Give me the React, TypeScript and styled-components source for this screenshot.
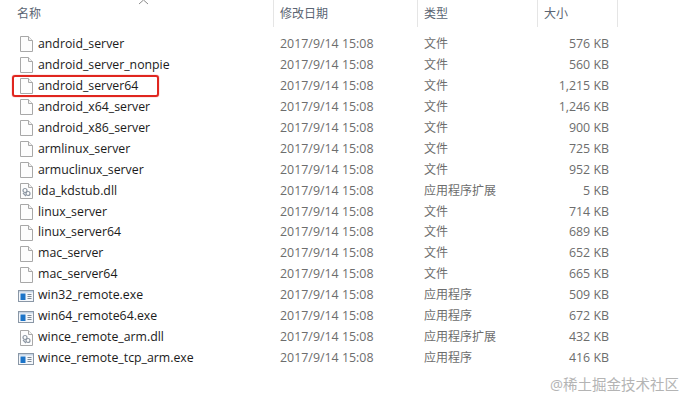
import styled, { createGlobalStyle } from "styled-components";

type Kind = "file" | "dll" | "exe";

const rows: { name: string; type: string; size: string; kind: Kind; marked?: boolean }[] = [
  { name: "android_server", type: "文件", size: "576 KB", kind: "file" },
  { name: "android_server_nonpie", type: "文件", size: "560 KB", kind: "file" },
  { name: "android_server64", type: "文件", size: "1,215 KB", kind: "file", marked: true },
  { name: "android_x64_server", type: "文件", size: "1,246 KB", kind: "file" },
  { name: "android_x86_server", type: "文件", size: "900 KB", kind: "file" },
  { name: "armlinux_server", type: "文件", size: "725 KB", kind: "file" },
  { name: "armuclinux_server", type: "文件", size: "952 KB", kind: "file" },
  { name: "ida_kdstub.dll", type: "应用程序扩展", size: "5 KB", kind: "dll" },
  { name: "linux_server", type: "文件", size: "714 KB", kind: "file" },
  { name: "linux_server64", type: "文件", size: "689 KB", kind: "file" },
  { name: "mac_server", type: "文件", size: "652 KB", kind: "file" },
  { name: "mac_server64", type: "文件", size: "665 KB", kind: "file" },
  { name: "win32_remote.exe", type: "应用程序", size: "509 KB", kind: "exe" },
  { name: "win64_remote64.exe", type: "应用程序", size: "672 KB", kind: "exe" },
  { name: "wince_remote_arm.dll", type: "应用程序扩展", size: "432 KB", kind: "dll" },
  { name: "wince_remote_tcp_arm.exe", type: "应用程序", size: "416 KB", kind: "exe" },
];

const FileIcon = ({ kind }: { kind: Kind }) => {
  if (kind === "exe") {
    return (
      <svg width="16" height="12" viewBox="0 0 16 12">
        <rect x="0.5" y="0.5" width="15" height="11" fill="#f4f7fb" stroke="#8a97a6" />
        <rect x="1" y="1" width="14" height="1.5" fill="#c4d3e4" />
        <rect x="2.5" y="3.5" width="5" height="6.5" fill="#1c74c8" />
        <path d="M9.5 4.5h4M9.5 6.5h4M9.5 8.5h4" stroke="#7d8996" strokeWidth="1" />
      </svg>
    );
  }
  return (
    <svg width="13" height="16" viewBox="0 0 13 16">
      <path d="M0.5 0.5H8.5L12.5 4.5V15.5H0.5Z" fill="#fdfdfd" stroke="#a8a8a8" />
      <path d="M8.5 0.5V4.5H12.5" fill="#f2f2f2" stroke="#a8a8a8" />
      {kind === "dll" && (
        <g fill="none" stroke="#8d97a3" strokeWidth="1.2">
          <circle cx="5" cy="7.5" r="2" />
          <circle cx="8" cy="10.5" r="2" />
          <path d="M3 10l3 3" />
        </g>
      )}
    </svg>
  );
};

export default function App() {
  return (
    <Page>
      <GlobalStyle />
      <SortCaret width="11" height="6" viewBox="0 0 11 6">
        <path d="M1 5L5.5 1L10 5" fill="none" stroke="#8a8a8a" strokeWidth="1" />
      </SortCaret>
      <Header>
        <HeadCell>名称</HeadCell>
        <HeadCell>修改日期</HeadCell>
        <HeadCell>类型</HeadCell>
        <HeadCell>大小</HeadCell>
      </Header>
      <List>
        {rows.map((r) => (
          <Row key={r.name}>
            <NameCell $kind={r.kind}>
              <IconSlot $kind={r.kind}>
                <FileIcon kind={r.kind} />
              </IconSlot>
              <Name>{r.name}</Name>
              {r.marked && <Marker />}
            </NameCell>
            <Muted>2017/9/14 15:08</Muted>
            <TypeText>{r.type}</TypeText>
            <Size>{r.size}</Size>
          </Row>
        ))}
      </List>
      <Watermark>@稀土掘金技术社区</Watermark>
    </Page>
  );
}

const GlobalStyle = createGlobalStyle`
  html, body {
    margin: 0;
    padding: 0;
    background: #fff;
  }
`;

const Page = styled.div`
  position: relative;
  width: 692px;
  height: 406px;
  overflow: hidden;
  background: #fff;
  font-family: "Open Sans", "Noto Sans CJK SC", sans-serif;
  font-size: 12.4px;
`;

const SortCaret = styled.svg`
  position: absolute;
  left: 138px;
  top: -1px;
`;

const Header = styled.div`
  display: grid;
  grid-template-columns: 274px 144px 120px 80px;
  height: 27px;
`;

const HeadCell = styled.div`
  padding-left: 6px;
  border-right: 1px solid #e5e5e5;
  color: #5a6472;
  font-size: 12px;
  line-height: 27px;

  &:first-child {
    padding-left: 17px;
  }
`;

const List = styled.div`
  display: flex;
  flex-direction: column;
  padding-top: 7px;
`;

const Row = styled.div`
  display: grid;
  grid-template-columns: 280px 144px 120px 65px;
  height: 20.95px;
  line-height: 20.95px;
  align-items: center;
`;

const NameCell = styled.div<{ $kind: Kind }>`
  position: relative;
  display: flex;
  align-items: center;
  padding-left: ${({ $kind }) => ($kind === "exe" ? "18px" : "20px")};
`;

const IconSlot = styled.span<{ $kind: Kind }>`
  display: flex;
  width: ${({ $kind }) => ($kind === "exe" ? "20px" : "18px")};
`;

const Name = styled.span`
  color: #1b1b1b;
  font-size: 12.3px;
`;

const Muted = styled.span`
  color: #6d6d6d;
`;

const TypeText = styled(Muted)`
  font-size: 12px;
`;

const Size = styled(Muted)`
  text-align: right;
`;

const Marker = styled.span`
  position: absolute;
  left: 12px;
  top: -1px;
  width: 147px;
  height: 22px;
  box-sizing: border-box;
  border: 2px solid #e0261f;
  border-radius: 3px;
  box-shadow: 0 0 1px #e0261f;
`;

const Watermark = styled.div`
  position: absolute;
  right: 13px;
  top: 375px;
  color: #b4b4b4;
  font-size: 14.5px;
  line-height: 20px;
`;
